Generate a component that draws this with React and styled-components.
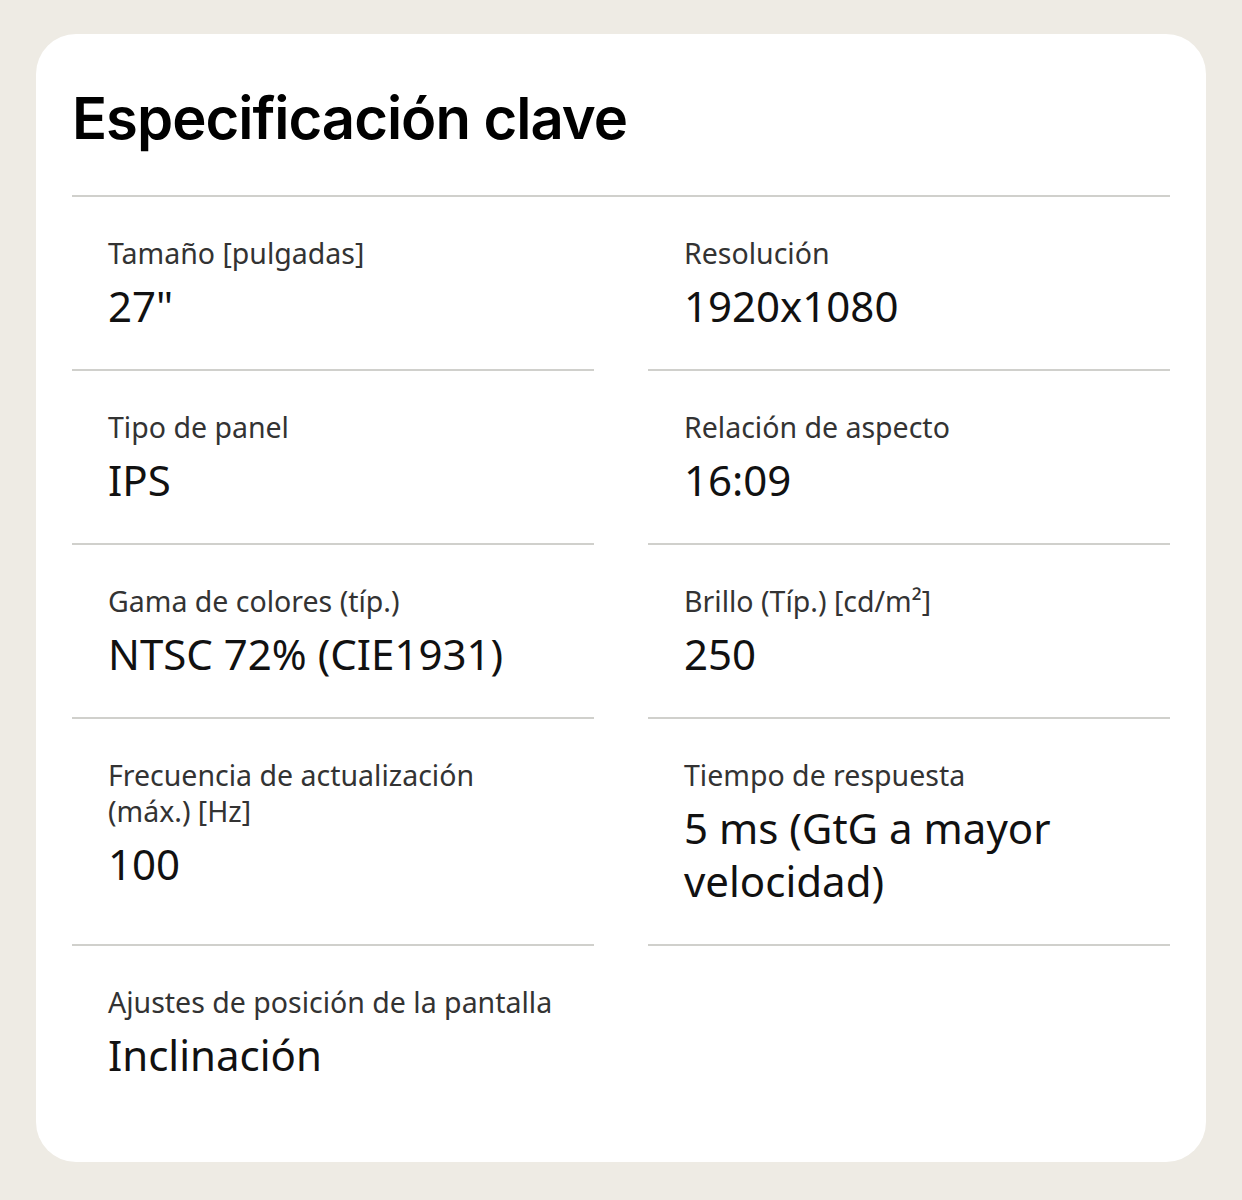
import React from 'react';
import styled, { createGlobalStyle } from 'styled-components';

const GlobalStyle = createGlobalStyle`
  body {
    margin: 0;
    background: #eeebe4;
    font-family: "Noto Sans", "Liberation Sans", sans-serif;
  }
`;

const specs = [
    { label: 'Tamaño [pulgadas]', value: '27"' },
    { label: 'Resolución', value: '1920x1080' },
    { label: 'Tipo de panel', value: 'IPS' },
    { label: 'Relación de aspecto', value: '16:09' },
    { label: 'Gama de colores (típ.)', value: 'NTSC 72% (CIE1931)' },
    { label: 'Brillo (Típ.) [cd/m²]', value: '250' },
    { label: 'Frecuencia de actualización (máx.) [Hz]', value: '100' },
    { label: 'Tiempo de respuesta', value: '5 ms (GtG a mayor velocidad)' },
    { label: 'Ajustes de posición de la pantalla', value: 'Inclinación', last: true },
];

const App = () => {
    return (
        <Page>
            <GlobalStyle />
            <Card>
                <Title>Especificación clave</Title>
                <SpecGrid>
                    {specs.map((spec, idx) => (
                        <SpecItem key={idx} last={spec.last}>
                            <Label>{spec.label}</Label>
                            <Value>{spec.value}</Value>
                        </SpecItem>
                    ))}
                </SpecGrid>
            </Card>
        </Page>
    );
};

const Page = styled.div`
    padding: 34px 36px 39px;
`;

const Card = styled.div`
    background: #ffffff;
    border-radius: 40px;
    padding: 46px 36px 44px;
`;

const Title = styled.h1`
    margin: 0;
    padding-bottom: 39px;
    font-family: Inter, "Liberation Sans", sans-serif;
    font-weight: 600;
    font-size: 58px;
    line-height: 76px;
    letter-spacing: -1px;
    color: #000;
    border-bottom: 2px solid #d0d0cc;
`;

const SpecGrid = styled.div`
    display: grid;
    grid-template-columns: 1fr 1fr;
    column-gap: 54px;
`;

const SpecItem = styled.div`
    padding: 38px 36px 37px;
    border-bottom: ${(props) => (props.last ? 'none' : '2px solid #d0d0cc')};
`;

const Label = styled.div`
    font-size: 28.5px;
    line-height: 36px;
    color: #333;
    margin-bottom: 8px;
`;

const Value = styled.div`
    font-size: 42px;
    line-height: 53px;
    color: #111;
`;

export default App;
